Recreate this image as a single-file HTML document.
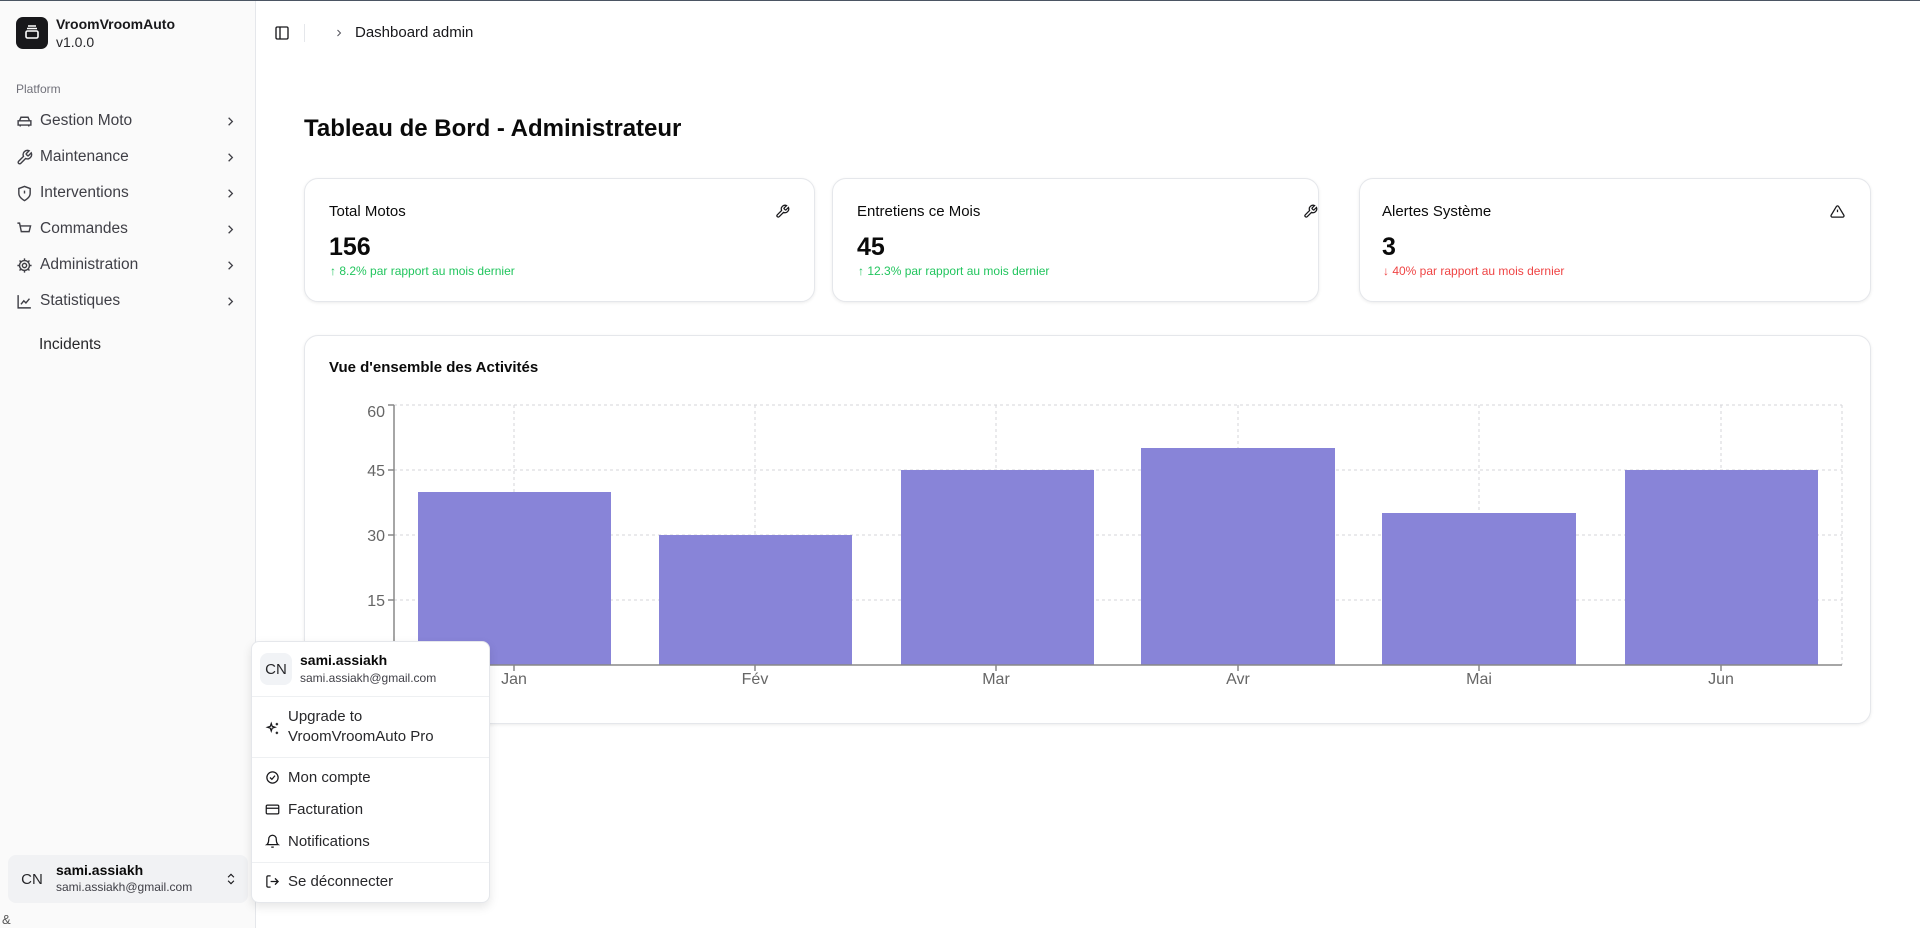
<!DOCTYPE html>
<html><head><meta charset="utf-8"><style>
*{box-sizing:border-box;margin:0;padding:0}
body{width:1920px;height:928px;overflow:hidden;background:#fff;font-family:"Liberation Sans",sans-serif;color:#0a0a0a;position:relative}
.a{position:absolute;white-space:nowrap}
.sb{left:0;top:0;width:256px;height:928px;background:#fafafa;border-right:1px solid #e5e7eb}
.nav{left:16px;font-size:15.5px;color:#3f3f46;display:flex;align-items:center;width:222px}
.nav svg{width:17px;height:17px;margin-right:7px}
.nav .ch{margin-left:auto;margin-right:0;width:15px}
.card{background:#fff;border:1px solid #e5e7eb;border-radius:14px;box-shadow:0 1px 3px rgba(0,0,0,.08)}
.ct{font-size:15px;color:#0a0a0a}
.cv{font-size:25px;font-weight:bold}
.cs{font-size:12px}
.mi{left:265px;font-size:15px;color:#27272a;display:flex;align-items:center}
.mi svg{width:15px;height:15px;margin-right:8px}
</style></head><body>
<div class="a" style="left:0;top:0;width:1920px;height:1px;background:#4b5563;z-index:5"></div>
<div class="a sb"></div>
<div class="a" style="left:16px;top:17px;width:32px;height:32px;background:#18181b;border-radius:7px">
<svg width="32" height="32" viewBox="0 0 32 32" fill="none" stroke="#fff" stroke-width="1.6"><rect x="10" y="14" width="12" height="7" rx="1.5"/><path d="M11 11.5h10M12 9h8"/></svg></div>
<div class="a" style="left:56px;top:16px;font-size:14px;font-weight:bold;color:#18181b">VroomVroomAuto</div>
<div class="a" style="left:56px;top:34px;font-size:14px;color:#27272a">v1.0.0</div>
<div class="a" style="left:16px;top:82px;font-size:12px;color:#71717a">Platform</div>

<div class="a nav" style="top:112px"><svg viewBox="0 0 24 24" fill="none" stroke="#3f3f46" stroke-width="2"><path d="M5 11l2-5h10l2 5M3 11h18v6H3zM6 17v2M18 17v2M7 14h.01M17 14h.01"/></svg>Gestion Moto<svg class="ch" viewBox="0 0 24 24" fill="none" stroke="#3f3f46" stroke-width="2"><path d="M9 6l6 6-6 6"/></svg></div>
<div class="a nav" style="top:148px"><svg viewBox="0 0 24 24" fill="none" stroke="#3f3f46" stroke-width="2"><path d="M14.7 6.3a1 1 0 000 1.4l1.6 1.6a1 1 0 001.4 0l3.8-3.8a6 6 0 01-7.9 7.9l-6.9 6.9a2.1 2.1 0 01-3-3l6.9-6.9a6 6 0 017.9-7.9z"/></svg>Maintenance<svg class="ch" viewBox="0 0 24 24" fill="none" stroke="#3f3f46" stroke-width="2"><path d="M9 6l6 6-6 6"/></svg></div>
<div class="a nav" style="top:184px"><svg viewBox="0 0 24 24" fill="none" stroke="#3f3f46" stroke-width="2"><path d="M12 22s8-4 8-10V5l-8-3-8 3v7c0 6 8 10 8 10zM12 8v4M12 16h.01"/></svg>Interventions<svg class="ch" viewBox="0 0 24 24" fill="none" stroke="#3f3f46" stroke-width="2"><path d="M9 6l6 6-6 6"/></svg></div>
<div class="a nav" style="top:220px"><svg viewBox="0 0 24 24" fill="none" stroke="#3f3f46" stroke-width="2"><path d="M2 3h3l2.5 12h11l2-8H6M8 20h.01M18 20h.01"/></svg>Commandes<svg class="ch" viewBox="0 0 24 24" fill="none" stroke="#3f3f46" stroke-width="2"><path d="M9 6l6 6-6 6"/></svg></div>
<div class="a nav" style="top:256px"><svg viewBox="0 0 24 24" fill="none" stroke="#3f3f46" stroke-width="2"><circle cx="12" cy="12" r="3"/><path d="M12 2v3M12 19v3M2 12h3M19 12h3M5 5l2 2M17 17l2 2M5 19l2-2M17 7l2-2"/><circle cx="12" cy="12" r="7"/></svg>Administration<svg class="ch" viewBox="0 0 24 24" fill="none" stroke="#3f3f46" stroke-width="2"><path d="M9 6l6 6-6 6"/></svg></div>
<div class="a nav" style="top:292px"><svg viewBox="0 0 24 24" fill="none" stroke="#3f3f46" stroke-width="2"><path d="M3 3v18h18M7 16l4-5 3 3 5-6"/></svg>Statistiques<svg class="ch" viewBox="0 0 24 24" fill="none" stroke="#3f3f46" stroke-width="2"><path d="M9 6l6 6-6 6"/></svg></div>
<div class="a" style="left:39px;top:336px;font-size:15.5px;color:#27272a">Incidents</div>

<div class="a" style="left:8px;top:855px;width:240px;height:48px;background:#f1f2f4;border-radius:8px"></div>
<div class="a" style="left:16px;top:863px;width:32px;height:32px;border-radius:8px;font-size:15px;color:#27272a;display:flex;align-items:center;justify-content:center">CN</div>
<div class="a" style="left:56px;top:862px;font-size:14px;font-weight:bold">sami.assiakh</div>
<div class="a" style="left:56px;top:880px;font-size:12px;color:#3f3f46">sami.assiakh@gmail.com</div>
<svg class="a" style="left:224px;top:871px" width="14" height="16" viewBox="0 0 24 24" fill="none" stroke="#18181b" stroke-width="2"><path d="M7 9l5-5 5 5M7 15l5 5 5-5"/></svg>
<div class="a" style="left:2px;top:912px;font-size:13px;color:#555">&amp;</div>

<svg class="a" style="left:274px;top:25px" width="16" height="16" viewBox="0 0 24 24" fill="none" stroke="#18181b" stroke-width="2"><rect x="3" y="3" width="18" height="18" rx="2"/><path d="M9 3v18"/></svg>
<div class="a" style="left:304px;top:24px;width:1px;height:18px;background:#e5e7eb"></div>
<svg class="a" style="left:333px;top:27px" width="12" height="12" viewBox="0 0 24 24" fill="none" stroke="#52525b" stroke-width="2"><path d="M9 6l6 6-6 6"/></svg>
<div class="a" style="left:355px;top:24px;font-size:15px;color:#18181b">Dashboard admin</div>

<div class="a" style="left:304px;top:115px;font-size:24px;font-weight:bold">Tableau de Bord - Administrateur</div>

<div class="a card" style="left:304px;top:178px;width:511px;height:124px"></div>
<div class="a ct" style="left:329px;top:203px">Total Motos</div>
<svg class="a" style="left:775px;top:204px" width="15" height="15" viewBox="0 0 24 24" fill="none" stroke="#18181b" stroke-width="2"><path d="M14.7 6.3a1 1 0 000 1.4l1.6 1.6a1 1 0 001.4 0l3.8-3.8a6 6 0 01-7.9 7.9l-6.9 6.9a2.1 2.1 0 01-3-3l6.9-6.9a6 6 0 017.9-7.9z"/></svg>
<div class="a cv" style="left:329px;top:233px">156</div>
<div class="a cs" style="left:330px;top:264px;color:#22c55e">↑ 8.2% par rapport au mois dernier</div>

<div class="a card" style="left:832px;top:178px;width:487px;height:124px"></div>
<div class="a ct" style="left:857px;top:203px">Entretiens ce Mois</div>
<svg class="a" style="left:1303px;top:204px" width="15" height="15" viewBox="0 0 24 24" fill="none" stroke="#18181b" stroke-width="2"><path d="M14.7 6.3a1 1 0 000 1.4l1.6 1.6a1 1 0 001.4 0l3.8-3.8a6 6 0 01-7.9 7.9l-6.9 6.9a2.1 2.1 0 01-3-3l6.9-6.9a6 6 0 017.9-7.9z"/></svg>
<div class="a cv" style="left:857px;top:233px">45</div>
<div class="a cs" style="left:858px;top:264px;color:#22c55e">↑ 12.3% par rapport au mois dernier</div>

<div class="a card" style="left:1359px;top:178px;width:512px;height:124px"></div>
<div class="a ct" style="left:1382px;top:203px">Alertes Système</div>
<svg class="a" style="left:1830px;top:204px" width="15" height="15" viewBox="0 0 24 24" fill="none" stroke="#18181b" stroke-width="2"><path d="M10.3 3.9L1.8 18a2 2 0 001.7 3h17a2 2 0 001.7-3L13.7 3.9a2 2 0 00-3.4 0zM12 9v4M12 17h.01"/></svg>
<div class="a cv" style="left:1382px;top:233px">3</div>
<div class="a cs" style="left:1383px;top:264px;color:#ef4444">↓ 40% par rapport au mois dernier</div>

<div class="a card" style="left:304px;top:335px;width:1567px;height:389px"></div>
<div class="a" style="left:329px;top:359px;font-size:15px;font-weight:bold">Vue d'ensemble des Activités</div>

<svg class="a" style="left:0;top:0" width="1920" height="928">
<g stroke="#d4d4d8" stroke-dasharray="3 3" stroke-width="1" fill="none">
<path d="M394 405H1842M394 470H1842M394 535H1842M394 600H1842M1842 405V665"/>
<path d="M514 405V665M755 405V665M996 405V665M1238 405V665M1479 405V665M1721 405V665"/>
</g>
<g fill="#8884d8">
<rect x="418" y="492" width="193" height="173"/>
<rect x="659" y="535" width="193" height="130"/>
<rect x="901" y="470" width="193" height="195"/>
<rect x="1141" y="448" width="194" height="217"/>
<rect x="1382" y="513" width="194" height="152"/>
<rect x="1625" y="470" width="193" height="195"/>
</g>
<g stroke="#888" stroke-width="1.5" fill="none"><path d="M394 405V665H1842M388 405H394M388 470H394M388 535H394M388 600H394M388 665H394"/>
<path d="M514 665v6M755 665v6M996 665v6M1238 665v6M1479 665v6M1721 665v6"/></g>
<g font-family="Liberation Sans" font-size="16" fill="#666" text-anchor="end">
<text x="385" y="417">60</text><text x="385" y="476">45</text><text x="385" y="541">30</text><text x="385" y="606">15</text></g>
<g font-family="Liberation Sans" font-size="16" fill="#666" text-anchor="middle">
<text x="514" y="684">Jan</text><text x="755" y="684">Fév</text><text x="996" y="684">Mar</text><text x="1238" y="684">Avr</text><text x="1479" y="684">Mai</text><text x="1721" y="684">Jun</text></g>
</svg>

<div class="a" style="left:251px;top:641px;width:239px;height:262px;background:#fff;border:1px solid #e5e7eb;border-radius:8px;box-shadow:0 4px 10px rgba(0,0,0,.1)"></div>
<div class="a" style="left:260px;top:653px;width:32px;height:32px;border-radius:8px;background:#f1f3f6;font-size:15px;color:#27272a;display:flex;align-items:center;justify-content:center">CN</div>
<div class="a" style="left:300px;top:652px;font-size:14px;font-weight:bold">sami.assiakh</div>
<div class="a" style="left:300px;top:671px;font-size:12px;color:#3f3f46">sami.assiakh@gmail.com</div>
<div class="a" style="left:252px;top:696px;width:237px;height:1px;background:#eef0f2"></div>
<svg class="a" style="left:265px;top:721px" width="15" height="15" viewBox="0 0 24 24" fill="none" stroke="#18181b" stroke-width="2"><path d="M10 4l1.5 4.5L16 10l-4.5 1.5L10 16l-1.5-4.5L4 10l4.5-1.5zM19 3v4M17 5h4M19 17v4M17 19h4"/></svg>
<div class="a" style="left:288px;top:707px;font-size:15px;color:#27272a;line-height:20px">Upgrade to<br>VroomVroomAuto Pro</div>
<div class="a" style="left:252px;top:757px;width:237px;height:1px;background:#eef0f2"></div>
<div class="a mi" style="top:769px"><svg viewBox="0 0 24 24" fill="none" stroke="#18181b" stroke-width="2"><circle cx="12" cy="12" r="9"/><path d="M8 12l3 3 5-6"/></svg>Mon compte</div>
<div class="a mi" style="top:801px"><svg viewBox="0 0 24 24" fill="none" stroke="#18181b" stroke-width="2"><rect x="2" y="5" width="20" height="14" rx="2"/><path d="M2 10h20"/></svg>Facturation</div>
<div class="a mi" style="top:833px"><svg viewBox="0 0 24 24" fill="none" stroke="#18181b" stroke-width="2"><path d="M6 8a6 6 0 0112 0c0 7 3 9 3 9H3s3-2 3-9M10 21h4"/></svg>Notifications</div>
<div class="a" style="left:252px;top:862px;width:237px;height:1px;background:#eef0f2"></div>
<div class="a mi" style="top:873px"><svg viewBox="0 0 24 24" fill="none" stroke="#18181b" stroke-width="2"><path d="M9 21H5a2 2 0 01-2-2V5a2 2 0 012-2h4M16 17l5-5-5-5M21 12H9"/></svg>Se déconnecter</div>
</body></html>
